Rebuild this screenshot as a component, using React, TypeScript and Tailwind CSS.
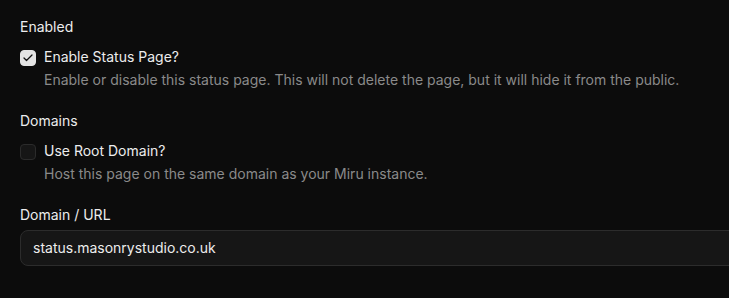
import { Check } from "lucide-react";

function CheckRow({ checked, label, detail }: { checked: boolean; label: string; detail: string }) {
  return (
    <div className="flex gap-2">
      <div
        className={`mt-1 flex h-4 w-4 shrink-0 items-center justify-center rounded-[4px] border ${
          checked ? "border-[#e4e4e4] bg-[#e4e4e4]" : "border-[#2b2b2b] bg-[#161616]"
        }`}
      >
        {checked && <Check className="h-3 w-3 text-[#111]" strokeWidth={2.5} />}
      </div>
      <div>
        <p className="text-sm leading-[22px] text-[#ededed]">{label}</p>
        <p className="mt-[1px] text-sm leading-[22px] text-[#8a8a8a]">{detail}</p>
      </div>
    </div>
  );
}

export default function App() {
  return (
    <div className="min-h-[298px] overflow-hidden bg-[#0c0c0c] px-5 pt-4 font-['Inter',sans-serif]">
      <div className="space-y-2">
        <h3 className="text-sm leading-[22px] font-normal text-[#ededed]">Enabled</h3>
        <CheckRow
          checked
          label="Enable Status Page?"
          detail="Enable or disable this status page. This will not delete the page, but it will hide it from the public."
        />
      </div>
      <div className="mt-[19px] space-y-2">
        <h3 className="text-sm leading-[22px] font-normal text-[#ededed]">Domains</h3>
        <CheckRow
          checked={false}
          label="Use Root Domain?"
          detail="Host this page on the same domain as your Miru instance."
        />
      </div>
      <div className="mt-[19px]">
        <label className="block text-sm leading-[22px] font-normal text-[#ededed]">Domain / URL</label>
        <div className="mt-1 -mr-10 flex h-9 items-center rounded-lg border border-[#2c2c2c] bg-[#161616] px-3">
          <span className="text-sm text-[#ededed]">status.masonrystudio.co.uk</span>
        </div>
      </div>
    </div>
  );
}
